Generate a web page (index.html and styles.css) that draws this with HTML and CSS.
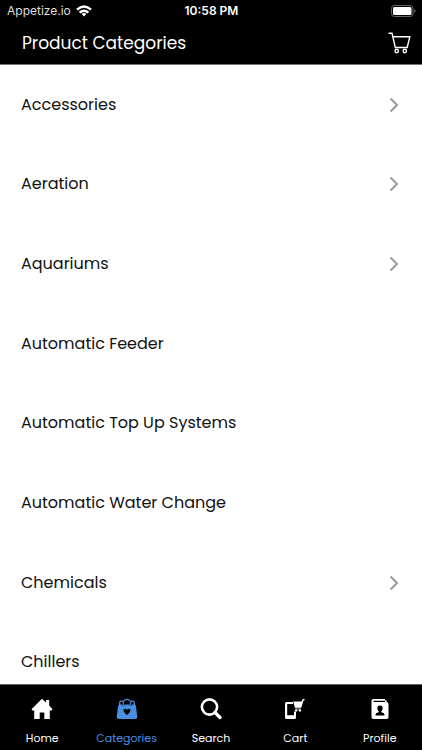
FILE: index.html
```html
<!DOCTYPE html>
<html lang="en">
<head>
<meta charset="utf-8">
<meta name="viewport" content="width=device-width, initial-scale=1">
<title>Product Categories</title>
<link rel="stylesheet" href="styles.css">
</head>
<body>
<header class="header">
  <div class="status">
    <span class="carrier">Appetize.io
      <svg width="16" height="12" viewBox="0 0 16 12" fill="none" stroke="currentColor" stroke-width="2.400" aria-hidden="true"><path d="M1 4.600Q8-1.800 15 4.600M3.600 7.600Q8 3.800 12.400 7.600"/><path d="M5.600 9Q8 7.200 10.400 9L8 11.600Z" fill="currentColor" stroke="none"/></svg>
    </span>
    <time class="time">10:58 PM</time>
    <svg class="battery" width="25" height="12" viewBox="0 0 25 12" aria-hidden="true"><rect x=".5" y=".5" width="21.500" height="11" rx="3" fill="none" stroke="#666"/><rect x="2" y="2" width="18.500" height="8" rx="1.500" fill="#fff"/><path d="M23.300 4v4q1.200-.5 1.200-2t-1.200-2Z" fill="#777"/></svg>
  </div>
  <div class="titlebar">
    <h1 class="title">Product Categories</h1>
    <button class="cart" type="button" aria-label="Cart">
      <svg width="23" height="22" viewBox="0 0 23 22" fill="none" stroke="currentColor" stroke-width="1.400" aria-hidden="true"><path d="M.5 1.200H4L7.300 15.500H19.200L21.800 4.800H4.800"/><circle cx="8.700" cy="19" r="1.700"/><circle cx="16.800" cy="19" r="1.700"/></svg>
    </button>
  </div>
</header>
<main class="content">
  <ul class="list">
    <li><a class="row" href="#">Accessories<svg class="chevron" viewBox="0 0 10 16" aria-hidden="true"><path d="M1.500 1.500 8 8l-6.500 6.500"/></svg></a></li>
    <li><a class="row" href="#">Aeration<svg class="chevron" viewBox="0 0 10 16" aria-hidden="true"><path d="M1.500 1.500 8 8l-6.500 6.500"/></svg></a></li>
    <li><a class="row" href="#">Aquariums<svg class="chevron" viewBox="0 0 10 16" aria-hidden="true"><path d="M1.500 1.500 8 8l-6.500 6.500"/></svg></a></li>
    <li><a class="row" href="#">Automatic Feeder</a></li>
    <li><a class="row" href="#">Automatic Top Up Systems</a></li>
    <li><a class="row" href="#">Automatic Water Change</a></li>
    <li><a class="row" href="#">Chemicals<svg class="chevron" viewBox="0 0 10 16" aria-hidden="true"><path d="M1.500 1.500 8 8l-6.500 6.500"/></svg></a></li>
    <li><a class="row" href="#">Chillers</a></li>
  </ul>
</main>
<nav class="tabs">
  <a class="tab" href="#"><svg class="icon" viewBox="0 0 22 22" aria-hidden="true"><path d="M11 .8 15 4.500V2h3.200v5.500L21.500 11.200 20.500 12.500H18.800V21H13.300V14.500H8.700V21H3.200V12.500H1.500L.5 11.200Z"/></svg>Home</a>
  <a class="tab active" href="#" aria-current="page"><svg class="icon" viewBox="0 0 22 22" aria-hidden="true"><path fill="none" stroke="currentColor" stroke-width="1.300" d="M7.300 7V5a3.700 3.700 0 0 1 7.400 0v2M3.700 7V4.800Q3.700 3.200 5.300 3.200H7M15 3.200h1.700Q18.300 3.200 18.300 4.800V7"/><path fill-rule="evenodd" d="M3.500 6.500h2.800v1h2V6.500h5.400v1h2V6.500h2.800Q19.500 6.500 19.800 7.500L21.300 18.500Q21.500 21 19 21H3Q.5 21 .7 18.500L2.200 7.500Q2.500 6.500 3.500 6.500ZM11 17C6.500 13.500 7 10.800 8.900 10.700Q10.300 10.700 11 12Q11.700 10.700 13.100 10.700C15 10.800 15.500 13.500 11 17Z"/></svg>Categories</a>
  <a class="tab" href="#"><svg class="icon" viewBox="0 0 22 22" fill="none" stroke="currentColor" aria-hidden="true"><circle cx="9.500" cy="9" r="7.600" stroke-width="2.600"/><path d="m15 14.500 5 5" stroke-width="3.200" stroke-linecap="round"/></svg>Search</a>
  <a class="tab" href="#"><svg class="icon" viewBox="0 0 22 22" aria-hidden="true"><path fill-rule="evenodd" d="M2.500 4H9v2H3.200v11.200H10V13.500h2v6Q12 21 10.500 21H2.500Q1 21 1 19.500V5.500Q1 4 2.500 4Z"/><path d="M9.200 3.500H17.600L18.600 1h2v1.200h-1L17.200 9.800H11Z"/><path d="M11.200 10.600H17v.7h-5.800Z"/><circle cx="12.200" cy="12.400" r="1.200"/><circle cx="15.900" cy="12.400" r="1.200"/></svg>Cart</a>
  <a class="tab" href="#"><svg class="icon" viewBox="0 0 22 22" aria-hidden="true"><path fill-rule="evenodd" d="M4.500 1H16v1.300h1.500V4Q19.500 4 19.500 6V19Q19.500 21 17.500 21H4.500Q2.500 21 2.500 19V3Q2.500 1 4.500 1ZM4.500 2.800V4H16V2.800ZM11 7.500c-2 0-2.700 1.300-2.600 3 .1 1.400.6 2.100 1.300 2.800v1C7.300 14.900 6.500 15.300 6.500 17.500h9c0-2.200-.8-2.600-3.200-3.200v-1c.7-.7 1.200-1.400 1.300-2.800.1-1.700-.6-3-2.600-3Z"/></svg>Profile</a>
</nav>
</body>
</html>
```
FILE: styles.css
```css
* {
  box-sizing: border-box;
}

body {
  display: flex;
  flex-direction: column;
  height: 100vh;
  margin: 0;
  background: #fff;
  color: #111;
  font-family: Poppins, Inter, sans-serif;
}

a {
  color: inherit;
  text-decoration: none;
}

.header {
  padding-bottom: 1px;
  border-bottom: 1px solid #777;
  background: #000;
  color: #fff;
}

.status {
  display: grid;
  grid-template-columns: 1fr auto 1fr;
  align-items: center;
  height: 22px;
  padding: 0 6px 0 7px;
  font: 12px/16px Inter, sans-serif;
}

.carrier {
  display: flex;
  align-items: center;
  gap: 5px;
  color: #ddd;
}

.carrier svg {
  color: #fff;
}

.time {
  font-weight: 600;
}

.battery {
  justify-self: end;
}

.titlebar {
  display: flex;
  align-items: center;
  justify-content: space-between;
  height: 41px;
  padding: 0 11px 0 22px;
}

.title {
  margin: 0;
  font-size: 17px;
  line-height: 24px;
  font-weight: 400;
}

.cart {
  display: flex;
  padding: 0;
  border: 0;
  background: none;
  color: #fff;
}

.content {
  display: flex;
  flex: 1;
  flex-direction: column;
  min-height: 0;
  overflow: hidden;
}

.list {
  display: grid;
  flex: 1;
  grid-auto-rows: 1fr;
  margin: 0 0 -18px;
  padding: 0;
  list-style: none;
}

.row {
  display: flex;
  align-items: center;
  justify-content: space-between;
  height: 100%;
  padding: 0 23px 0 21px;
  font-size: 16px;
  line-height: 24px;
}

.chevron {
  width: 10px;
  height: 16px;
  fill: none;
  stroke: #999;
  stroke-width: 2;
}

.tabs {
  display: grid;
  grid-template-columns: repeat(5, 1fr);
  height: 66px;
  padding-top: 13px;
  border-top: 1px solid #666;
  background: #000;
}

.tab {
  display: flex;
  flex-direction: column;
  align-items: center;
  gap: 10px;
  color: #fff;
  font-size: 11px;
  line-height: 16px;
}

.active {
  color: #4a8fe2;
}

.icon {
  width: 22px;
  height: 22px;
  fill: currentColor;
}

.icon[fill="none"] {
  fill: none;
}
```
